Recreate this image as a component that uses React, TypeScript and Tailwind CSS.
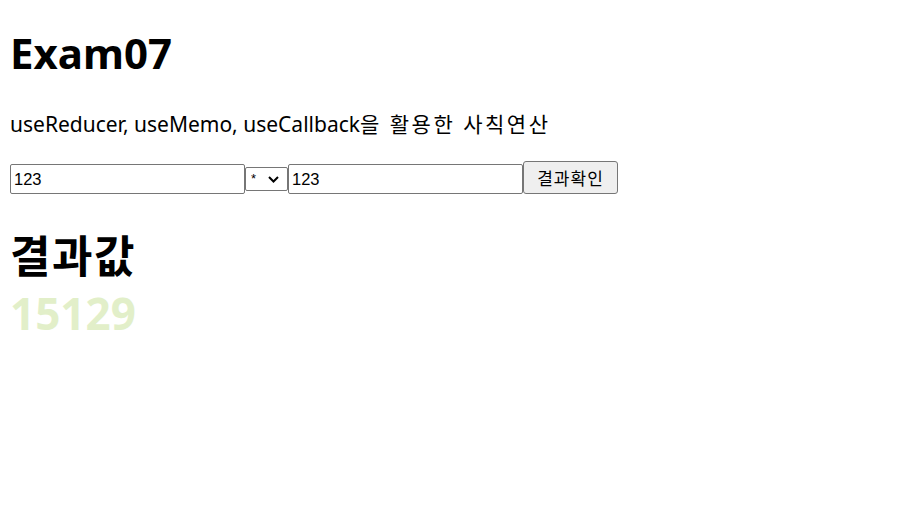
import { useCallback, useMemo, useReducer, useState } from "react";

type Op = "+" | "-" | "*" | "/";

type State = { a: string; op: Op; b: string };

type Action =
  | { type: "a"; value: string }
  | { type: "b"; value: string }
  | { type: "op"; value: Op };

function reducer(state: State, action: Action): State {
  switch (action.type) {
    case "a":
      return { ...state, a: action.value };
    case "b":
      return { ...state, b: action.value };
    case "op":
      return { ...state, op: action.value };
    default:
      return state;
  }
}

function calc(a: number, op: Op, b: number) {
  if (op === "+") return a + b;
  if (op === "-") return a - b;
  if (op === "*") return a * b;
  return b === 0 ? 0 : a / b;
}

const inputClass =
  "h-[30px] w-[235px] rounded-[2px] border border-[#767676] bg-white px-[3px] text-[16.5px] text-black outline-none";

export default function App() {
  const [state, dispatch] = useReducer(reducer, { a: "123", op: "*", b: "123" });
  const [submitted, setSubmitted] = useState({ a: "123", op: "*" as Op, b: "123" });

  const result = useMemo(() => {
    return calc(Number(submitted.a), submitted.op, Number(submitted.b));
  }, [submitted]);

  const handleCheck = useCallback(() => {
    setSubmitted({ ...state });
  }, [state]);

  return (
    <div className="min-h-screen bg-white px-[10px] text-black [font-family:'Noto_Sans','Noto_Sans_CJK_KR',sans-serif]">
      <h1 className="pt-[26px] text-[42px] font-bold leading-[53px]">Exam07</h1>
      <p className="mt-[32px] text-[21px] leading-[27px]">
        useReducer, useMemo, useCallback
        <span className="tracking-[2.5px]">을 활용한 사칙연산</span>
      </p>

      <div className="mt-[23px] flex items-end [font-family:'Liberation_Sans','Noto_Sans_CJK_KR',sans-serif]">
        <input
          className={inputClass}
          value={state.a}
          onChange={(e) => dispatch({ type: "a", value: e.target.value })}
        />
        <div className="relative mb-[3px] flex h-[24px] w-[43px] shrink-0">
          <select
            className="box-border block h-[24px] w-[43px] appearance-none rounded-[2px] border border-[#767676] bg-white py-0 pl-[5px] text-[13px] leading-[14px] text-black"
            value={state.op}
            onChange={(e) => dispatch({ type: "op", value: e.target.value as Op })}
          >
            <option value="+">+</option>
            <option value="-">-</option>
            <option value="*">*</option>
            <option value="/">/</option>
          </select>
          <svg
            className="pointer-events-none absolute right-[9px] top-[9px]"
            width="11"
            height="7"
            viewBox="0 0 11 7"
            fill="none"
          >
            <path d="M1 1l4.5 4.5L10 1" stroke="#000" strokeWidth="2" />
          </svg>
        </div>
        <input
          className={inputClass}
          value={state.b}
          onChange={(e) => dispatch({ type: "b", value: e.target.value })}
        />
        <button
          type="button"
          onClick={handleCheck}
          className="h-[33px] w-[95px] rounded-[3px] border border-[#767676] bg-[#efefef] text-[17px] tracking-[1px] text-black [font-family:'Noto_Sans_CJK_KR',sans-serif]"
        >
          결과확인
        </button>
      </div>

      <h1 className="mt-[36px] text-[44px] font-bold leading-[53px] tracking-[1.5px]">결과값</h1>
      <h1 className="mt-[4px] text-[44px] font-bold leading-[53px] text-[#e2efc9]">{result}</h1>
    </div>
  );
}
